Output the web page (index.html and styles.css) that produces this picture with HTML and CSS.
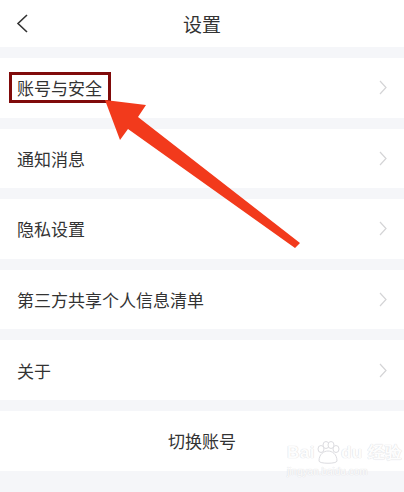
FILE: index.html
```html
<!DOCTYPE html>
<html lang="zh">
<head>
<meta charset="utf-8">
<link rel="stylesheet" href="styles.css">
</head>
<body>
<div class="page">
  <header class="topbar">
    <svg class="back" width="14" height="22" viewBox="0 0 14 22"><polyline points="11,2 2,10.5 11,19" fill="none" stroke="#333" stroke-width="1.6"/></svg>
    <h1 class="title">设置</h1>
  </header>
  <div class="list">
    <div class="row"><span class="label boxed">账号与安全</span><svg class="chev" width="8" height="15" viewBox="0 0 8 15"><polyline points="1,1 7,7.5 1,14" fill="none" stroke="#d4d4d6" stroke-width="1.2"/></svg></div>
    <div class="row"><span class="label">通知消息</span><svg class="chev" width="8" height="15" viewBox="0 0 8 15"><polyline points="1,1 7,7.5 1,14" fill="none" stroke="#d4d4d6" stroke-width="1.2"/></svg></div>
    <div class="row"><span class="label">隐私设置</span><svg class="chev" width="8" height="15" viewBox="0 0 8 15"><polyline points="1,1 7,7.5 1,14" fill="none" stroke="#d4d4d6" stroke-width="1.2"/></svg></div>
    <div class="row"><span class="label">第三方共享个人信息清单</span><svg class="chev" width="8" height="15" viewBox="0 0 8 15"><polyline points="1,1 7,7.5 1,14" fill="none" stroke="#d4d4d6" stroke-width="1.2"/></svg></div>
    <div class="row"><span class="label">关于</span><svg class="chev" width="8" height="15" viewBox="0 0 8 15"><polyline points="1,1 7,7.5 1,14" fill="none" stroke="#d4d4d6" stroke-width="1.2"/></svg></div>
    <div class="row center"><span class="label">切换账号</span></div>
  </div>
  <svg class="arrow" width="404" height="492" viewBox="0 0 404 492">
    <polygon points="105,100 146,105 138,117 300,243 295,248 128,129 120,140" fill="#f23a1c"/>
  </svg>
  <div class="watermark">
    <div class="wm-top">Bai<svg class="paw" width="26" height="24" viewBox="0 0 26 24"><g fill="#fff" stroke="#dcdce0" stroke-width="1"><ellipse cx="6" cy="8" rx="3" ry="3.5"/><ellipse cx="11" cy="4" rx="3" ry="3.5"/><ellipse cx="16" cy="4" rx="3" ry="3.5"/><ellipse cx="21" cy="8" rx="3" ry="3.5"/><path d="M4,20 C4,13 9,10 13,10 C17,10 22,13 22,20 C22,23 4,23 4,20 Z"/></g></svg>du 经验</div>
    <div class="wm-bot">jingyan.baidu.com</div>
  </div>
</div>
</body>
</html>
```
FILE: styles.css
```css
html, body {
  margin: 0;
  padding: 0;
  background: #f5f6f9;
}
.page {
  position: relative;
  width: 404px;
  height: 492px;
  overflow: hidden;
  font-family: "Noto Sans CJK SC", "Noto Sans", sans-serif;
  color: #333;
}
.topbar {
  height: 47px;
  background: #fff;
  display: flex;
  align-items: center;
  justify-content: center;
  position: relative;
}
.back {
  position: absolute;
  left: 16px;
  top: 13px;
}
.title {
  margin: 0;
  font-size: 19px;
  font-weight: 400;
  color: #333;
  line-height: 1;
}
.list {
  display: flex;
  flex-direction: column;
  gap: 11px;
  padding-top: 11px;
}
.row {
  height: 59.6px;
  background: #fff;
  display: flex;
  align-items: center;
  justify-content: space-between;
  padding: 0 17px 0 17px;
  box-sizing: border-box;
}
.row.center {
  justify-content: center;
}
.label {
  font-size: 17px;
  line-height: 1;
  color: #333;
}
.boxed {
  outline: 3px solid #800a0a;
  outline-offset: 4px;
  margin-left: -1px;
  padding: 0 2px 0 1px;
}
.arrow {
  position: absolute;
  left: 0;
  top: 0;
  pointer-events: none;
}
.watermark {
  position: absolute;
  left: 287px;
  top: 441px;
  color: #fdfdfd;
  text-shadow: 0 0 1px #dcdce0, 0 0 1px #dcdce0;
  font-family: "Liberation Sans", sans-serif;
}
.wm-top {
  display: flex;
  align-items: flex-end;
  font-size: 17px;
  font-weight: 700;
  line-height: 20px;
  letter-spacing: 0.5px;
}
.paw {
  margin: 0 0 -2px 0;
}
.wm-bot {
  font-size: 10px;
  line-height: 12px;
  margin-top: 3px;
}
```
